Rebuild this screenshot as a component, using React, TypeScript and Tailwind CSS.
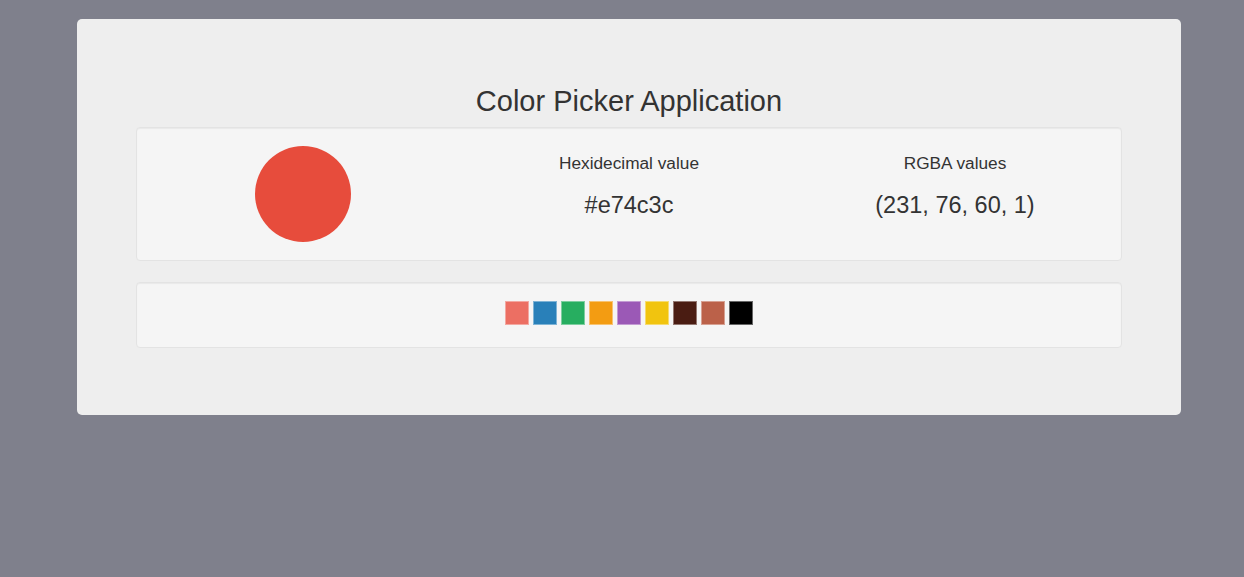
import React, { useState } from "react";

const swatches = [
  "#ec6f63",
  "#2980b9",
  "#27ae60",
  "#f39c12",
  "#9b59b6",
  "#f1c40f",
  "#4a1c12",
  "#bb6149",
  "#000000",
];

const hexToRgba = (hex: string) => {
  const h = hex.replace("#", "");
  const r = parseInt(h.slice(0, 2), 16);
  const g = parseInt(h.slice(2, 4), 16);
  const b = parseInt(h.slice(4, 6), 16);
  return `(${r}, ${g}, ${b}, 1)`;
};

const App = () => {
  const [color, setColor] = useState("#e74c3c");

  return (
    <div
      className="min-h-[577px] w-full bg-[#7f808c] pt-[19px] text-[#333333]"
      style={{ fontFamily: '"Liberation Sans", Arial, sans-serif' }}
    >
      <div className="ml-[77px] w-[1104px] rounded-[5px] bg-[#eeeeee] px-[59px] pt-[67px] pb-[67px]">
        <h2 className="mb-[11px] text-center text-[29px] leading-[30px] font-normal">
          Color Picker Application
        </h2>

        {/* current colour */}
        <div className="mb-[21px] rounded-[4px] border border-[#e3e3e3] bg-[#f5f5f5] px-[3px] py-[18px] shadow-[inset_0_1px_1px_rgba(0,0,0,0.05)]">
          <div className="grid grid-cols-3">
            <div className="flex justify-center">
              <div
                className="h-[96px] w-[96px] rounded-full"
                style={{ backgroundColor: color }}
              />
            </div>
            <div className="flex flex-col items-center pt-[7px]">
              <p className="text-[17.25px] leading-[20px]">Hexidecimal value</p>
              <p className="mt-[18px] text-[23.5px] leading-[28px]">{color}</p>
            </div>
            <div className="flex flex-col items-center pt-[7px]">
              <p className="text-[17.25px] leading-[20px]">RGBA values</p>
              <p className="mt-[18px] text-[23.5px] leading-[28px]">
                {hexToRgba(color)}
              </p>
            </div>
          </div>
        </div>

        {/* swatches */}
        <div className="flex h-[66px] justify-center gap-[4px] rounded-[4px] border border-[#e3e3e3] bg-[#f5f5f5] pt-[18px] shadow-[inset_0_1px_1px_rgba(0,0,0,0.05)]">
          {swatches.map((s) => (
            <button
              key={s}
              onClick={() => setColor(s)}
              className="h-[24px] w-[24px] border border-white/40"
              style={{ backgroundColor: s }}
            />
          ))}
        </div>
      </div>
    </div>
  );
};

export default App;
